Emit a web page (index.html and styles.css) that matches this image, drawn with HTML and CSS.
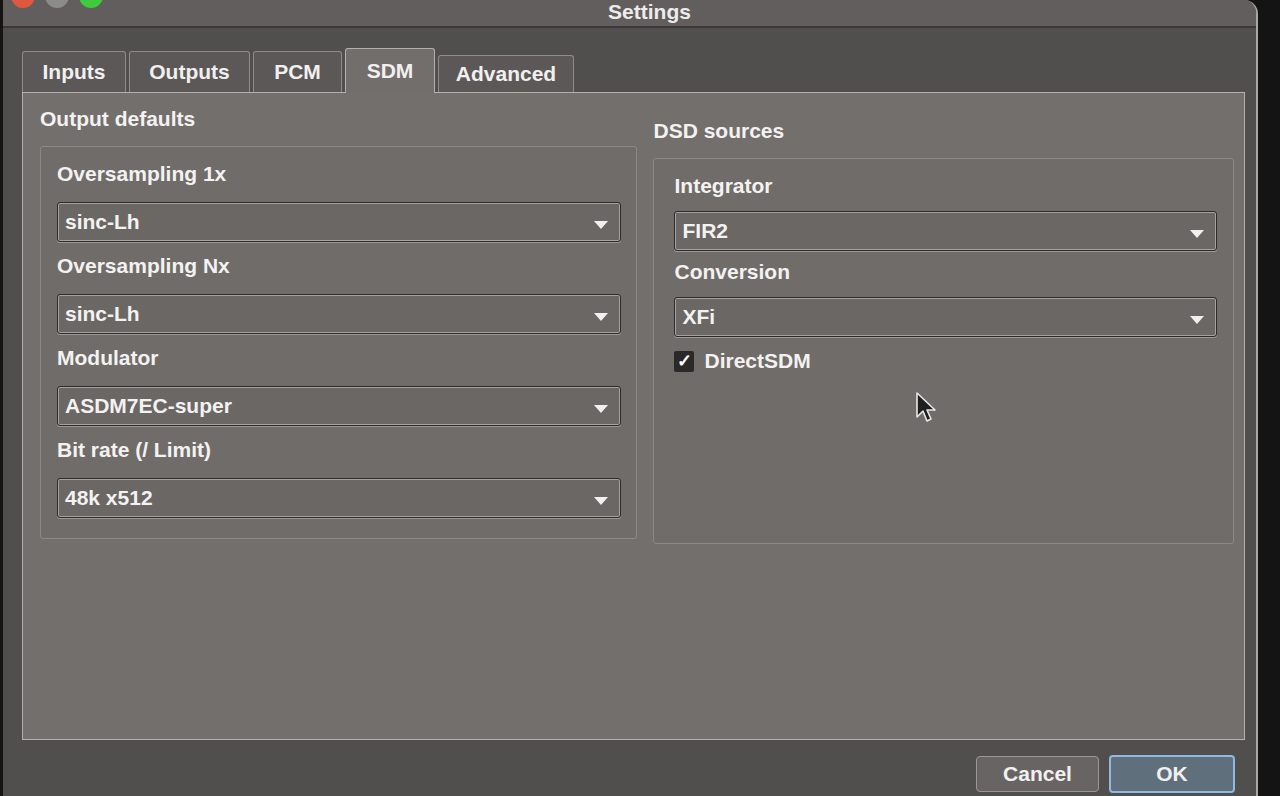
FILE: index.html
```html
<!DOCTYPE html>
<html>
<head>
<meta charset="utf-8">
<title>Settings</title>
<link rel="stylesheet" href="styles.css">
</head>
<body>
<div class="window">
  <div class="titlebar">
    <div class="lights">
      <span class="light red"></span>
      <span class="light grey"></span>
      <span class="light green"></span>
    </div>
    <div class="title">Settings</div>
    <div></div>
  </div>
  <div class="body">
    <div class="tabs">
      <div class="tab">Inputs</div>
      <div class="tab">Outputs</div>
      <div class="tab">PCM</div>
      <div class="tab active">SDM</div>
      <div class="tab">Advanced</div>
    </div>
    <div class="panel">
      <div class="column">
        <div class="group-title">Output defaults</div>
        <div class="group">
          <div class="label">Oversampling 1x</div>
          <div class="combo"><span>sinc-Lh</span><i class="arrow"></i></div>
          <div class="label">Oversampling Nx</div>
          <div class="combo"><span>sinc-Lh</span><i class="arrow"></i></div>
          <div class="label">Modulator</div>
          <div class="combo"><span>ASDM7EC-super</span><i class="arrow"></i></div>
          <div class="label">Bit rate (/ Limit)</div>
          <div class="combo"><span>48k x512</span><i class="arrow"></i></div>
        </div>
      </div>
      <div class="column right">
        <div class="group-title">DSD sources</div>
        <div class="group">
          <div class="label">Integrator</div>
          <div class="combo"><span>FIR2</span><i class="arrow"></i></div>
          <div class="label">Conversion</div>
          <div class="combo"><span>XFi</span><i class="arrow"></i></div>
          <div class="check-row">
            <span class="checkbox">✓</span>
            <span class="check-label">DirectSDM</span>
          </div>
          <svg class="cursor" width="22" height="32" viewBox="0 0 22 32">
            <path d="M2 2 L2 26 L8 20 L12 30 L16 28 L12 19 L20 19 Z" fill="#1e1e1e" stroke="#e8e8e8" stroke-width="1.6" stroke-linejoin="round"/>
          </svg>
        </div>
      </div>
    </div>
    <div class="buttons">
      <div class="btn">Cancel</div>
      <div class="btn ok">OK</div>
    </div>
  </div>
</div>
</body>
</html>
```
FILE: styles.css
```css
html, body {
  margin: 0;
  padding: 0;
  background: #151414;
  height: 796px;
  overflow: hidden;
}

body {
  font-family: "Liberation Sans", Arial, sans-serif;
  color: #f4f2f1;
}

.window {
  width: 1253px;
  height: 796px;
  margin-left: 3px;
  background: #555251;
  border-right: 2px solid #a9a6a4;
  border-top-right-radius: 14px;
  display: flex;
  flex-direction: column;
  overflow: hidden;
}

.titlebar {
  height: 26px;
  background: #615e5d;
  border-bottom: 2px solid #3b3938;
  display: grid;
  grid-template-columns: 1fr auto 1fr;
  align-items: center;
  flex: none;
}

.lights {
  display: flex;
  gap: 10px;
  align-self: start;
  margin-top: -16px;
  padding-left: 8px;
}

.light {
  width: 24px;
  height: 24px;
  border-radius: 50%;
}
.red { background: #e0573f; }
.grey { background: #8d8b8a; }
.green { background: #3fcb3f; }

.title {
  font-size: 21px;
  font-weight: bold;
  color: #eeeceb;
  padding-left: 40px;
  margin-top: -2px;
}

.body {
  flex: 1;
  background: #514f4d;
  display: flex;
  flex-direction: column;
  padding: 20px 11px 0 19px;
}

.tabs {
  display: flex;
  gap: 3px;
  align-items: flex-end;
  height: 44px;
  position: relative;
  z-index: 1;
}

.tab {
  height: 40px;
  padding: 0 15px;
  background: #5b5857;
  border: 1px solid #8e8b89;
  border-bottom: none;
  border-radius: 3px 3px 0 0;
  font-size: 21px;
  font-weight: bold;
  display: flex;
  align-items: center;
  justify-content: center;
  color: #f2f0ef;
}
.tab:nth-child(1) { width: 72px; }
.tab:nth-child(2) { width: 89px; }
.tab:nth-child(3) { width: 57px; }
.tab:nth-child(4) { width: 58px; }
.tab:nth-child(5) { width: 104px; height: 36px; }

.tab.active {
  height: 44px;
  background: #716e6c;
  border-color: #b2afad;
  margin-bottom: -1px;
}

.panel {
  height: 648px;
  background: #736f6d;
  border: 1px solid #b3b0ae;
  display: flex;
  gap: 16px;
  padding: 12px 10px 0 17px;
  box-sizing: border-box;
}

.column {
  width: 599px;
  display: flex;
  flex-direction: column;
}
.column.right {
  width: 582px;
  padding-top: 12px;
}

.group-title {
  font-size: 21px;
  font-weight: bold;
  height: 27px;
  line-height: 27px;
  margin-bottom: 14px;
}

.group {
  border: 1px solid #8b8886;
  border-radius: 3px;
  background: #6f6c6a;
  height: 393px;
  box-sizing: border-box;
  padding: 14px 15px 0 16px;
  display: flex;
  flex-direction: column;
  position: relative;
}
.right .group {
  height: 386px;
  padding: 14px 16px 0 20px;
}

.label {
  font-size: 21px;
  font-weight: bold;
  height: 26px;
  line-height: 26px;
  margin-bottom: 15px;
}

.combo {
  height: 40px;
  box-sizing: border-box;
  border: 1px solid #2e2c2b;
  box-shadow: 0 0 0 1px #a5a2a0 inset, 0 1px 0 #9c9997;
  border-radius: 3px;
  background: #6a6765;
  display: flex;
  align-items: center;
  justify-content: space-between;
  padding: 0 12px 0 7px;
  font-size: 21px;
  font-weight: bold;
  margin-bottom: 11px;
}
.right .combo { margin-bottom: 8px; }
.right .label { margin-bottom: 12px; }

.arrow {
  width: 0;
  height: 0;
  border-left: 7px solid transparent;
  border-right: 7px solid transparent;
  border-top: 8px solid #f2f0ef;
  margin-top: 6px;
}

.check-row {
  display: flex;
  align-items: center;
  gap: 10px;
  margin-top: 4px;
}

.checkbox {
  width: 20px;
  height: 21px;
  background: #2a2828;
  color: #fff;
  font-size: 18px;
  font-weight: bold;
  display: flex;
  align-items: center;
  justify-content: center;
  border-radius: 2px;
}

.check-label {
  font-size: 21px;
  font-weight: bold;
}

.cursor {
  position: absolute;
  left: 261px;
  top: 232px;
}

.buttons {
  display: flex;
  justify-content: flex-end;
  gap: 10px;
  padding: 16px 10px 0 0;
}

.btn {
  width: 123px;
  height: 36px;
  box-sizing: border-box;
  background: #676463;
  border: 1px solid #9a9795;
  border-radius: 4px;
  font-size: 21px;
  font-weight: bold;
  display: flex;
  align-items: center;
  justify-content: center;
  color: #f2f0ef;
}

.btn.ok {
  width: 126px;
  height: 38px;
  margin-top: -1px;
  background: #5f6f7c;
  border: 2px solid #8fb9e0;
}
```
